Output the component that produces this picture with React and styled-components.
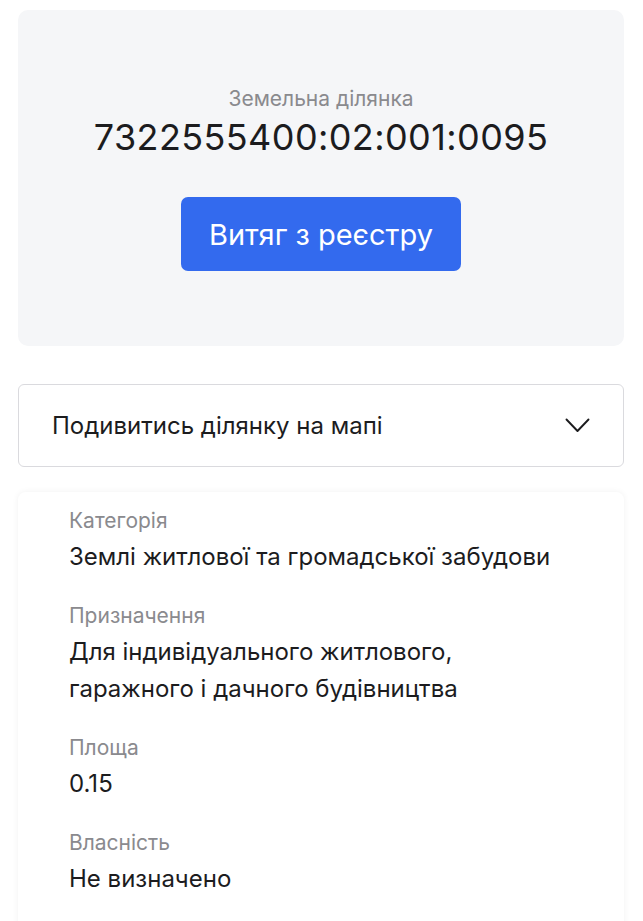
import React from 'react';
import styled, { createGlobalStyle } from 'styled-components';

const GlobalStyle = createGlobalStyle`
  body {
    margin: 0;
    background: #fff;
    font-family: Inter, "Noto Sans", sans-serif;
    color: #1c1c1e;
  }
`;

const Page = styled.div`
  padding: 10px 19px 0 18px;
  display: flex;
  flex-direction: column;
`;

const Hero = styled.section`
  background: #f5f6f8;
  border-radius: 10px;
  height: 336px;
  display: flex;
  flex-direction: column;
  align-items: center;
  padding-top: 76px;
  box-sizing: border-box;
`;

const Caption = styled.div`
  font-size: 21px;
  line-height: 26px;
  color: #8a8a8e;
`;

const Cadastre = styled.div`
  font-size: 36px;
  line-height: 44px;
  margin-top: 3px;
  color: #1c1c1e;
  letter-spacing: 0.4px;
`;

const PrimaryButton = styled.button`
  margin-top: 38px;
  width: 280px;
  height: 74px;
  border: none;
  border-radius: 7px;
  background: #336aee;
  color: #fff;
  font-family: inherit;
  font-size: 29px;
  cursor: pointer;
`;

const Accordion = styled.div`
  margin-top: 38px;
  height: 83px;
  box-sizing: border-box;
  border: 1px solid #dadade;
  border-radius: 6px;
  display: flex;
  align-items: center;
  justify-content: space-between;
  padding: 0 33px 0 33px;
  font-size: 24px;
  color: #1c1c1e;
`;

const Details = styled.section`
  margin-top: 25px;
  border-radius: 8px 8px 0 0;
  box-shadow: 0 0 6px rgba(0, 0, 0, 0.06);
  padding: 16px 40px 40px 51px;
  display: flex;
  flex-direction: column;
  gap: 28px;
`;

const Item = styled.div`
  display: flex;
  flex-direction: column;
`;

const Label = styled.div`
  font-size: 21px;
  line-height: 26px;
  color: #8a8a8e;
`;

const Value = styled.div`
  font-size: 24px;
  line-height: 37px;
  margin-top: 4px;
  color: #1c1c1e;
`;

const Chevron = () => (
  <svg width="25" height="15" viewBox="0 0 25 15" fill="none">
    <path d="M1.5 1.5 L12.5 13 L23.5 1.5" stroke="#1c1c1e" strokeWidth="1.9" strokeLinecap="round" strokeLinejoin="round" />
  </svg>
);

const fields = [
  { label: 'Категорія', value: 'Землі житлової та громадської забудови' },
  { label: 'Призначення', value: ['Для індивідуального житлового,', 'гаражного і дачного будівництва'] },
  { label: 'Площа', value: '0.15' },
  { label: 'Власність', value: 'Не визначено' },
];

export default function App() {
  return (
    <>
      <GlobalStyle />
      <Page>
        <Hero>
          <Caption>Земельна ділянка</Caption>
          <Cadastre>7322555400:02:001:0095</Cadastre>
          <PrimaryButton>Витяг з реєстру</PrimaryButton>
        </Hero>
        <Accordion>
          <span>Подивитись ділянку на мапі</span>
          <Chevron />
        </Accordion>
        <Details>
          {fields.map((f) => (
            <Item key={f.label}>
              <Label>{f.label}</Label>
              <Value>
                {Array.isArray(f.value)
                  ? f.value.map((line) => <div key={line}>{line}</div>)
                  : f.value}
              </Value>
            </Item>
          ))}
        </Details>
      </Page>
    </>
  );
}
